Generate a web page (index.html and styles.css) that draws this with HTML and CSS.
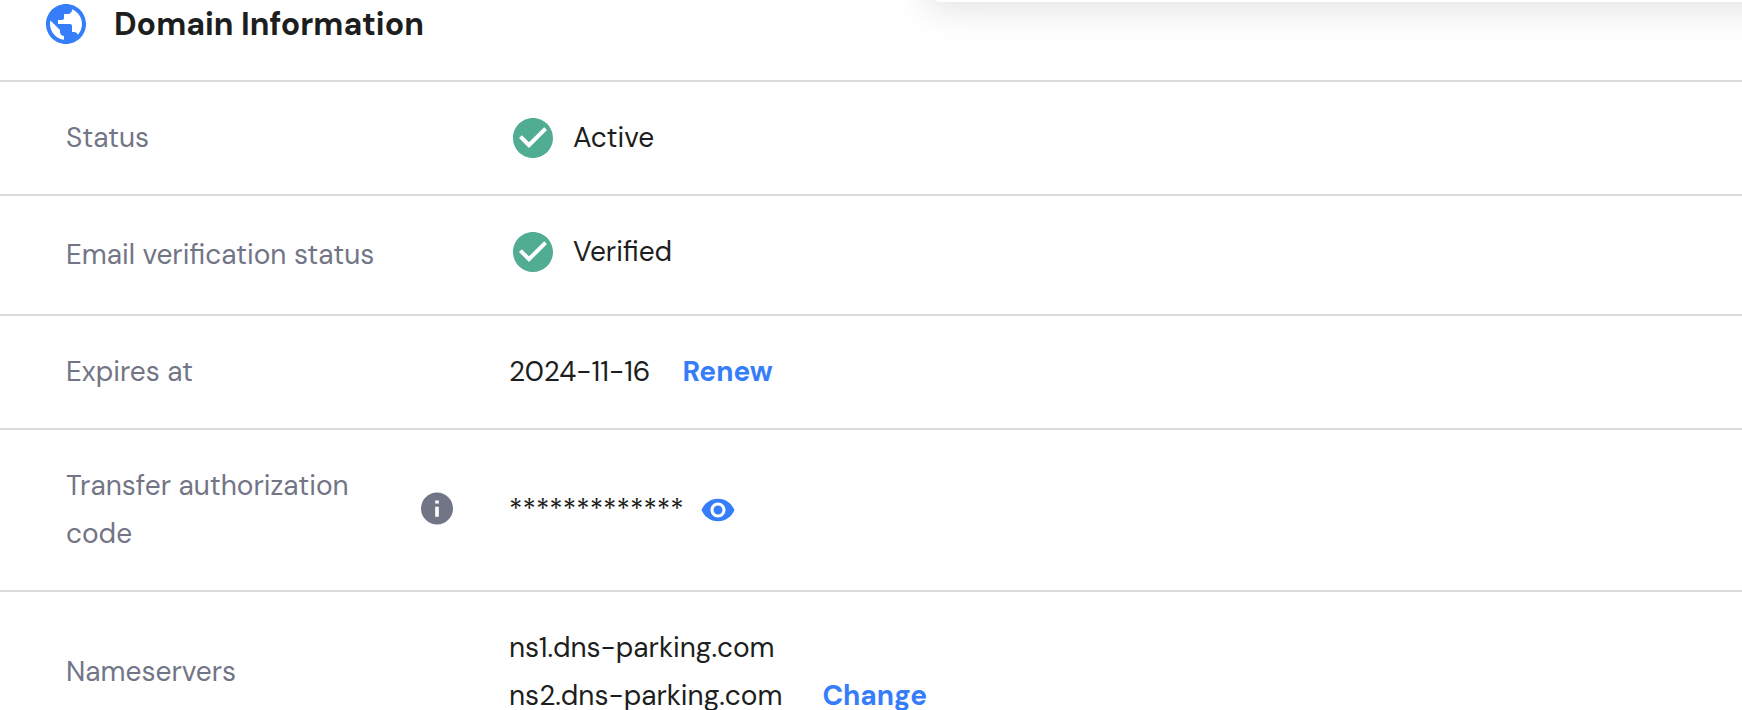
FILE: index.html
```html
<!DOCTYPE html>
<html lang="en">
<head>
<meta charset="utf-8">
<title>Domain Information</title>
<link rel="stylesheet" href="styles.css">
</head>
<body>
<main class="card">
  <header class="card-header">
    <svg class="icon-globe" viewBox="0 0 24 24"><path d="M12 2C6.48 2 2 6.48 2 12s4.48 10 10 10 10-4.480 10-10S17.520 2 12 2zm-1 17.930c-3.950-.49-7-3.850-7-7.930 0-.62.08-1.210.21-1.790L9 15v1c0 1.100.9 2 2 2v1.930zm6.900-2.540c-.26-.81-1-1.390-1.900-1.390h-1v-3c0-.55-.45-1-1-1H8v-2h2c.55 0 1-.45 1-1V7h2c1.100 0 2-.9 2-2v-.41c2.930 1.190 5 4.060 5 7.410 0 2.080-.8 3.970-2.100 5.390z"/></svg>
    <h1 class="title">Domain Information</h1>
  </header>
  <section class="row">
    <div class="label">Status</div>
    <div class="value">
      <svg class="icon-check" viewBox="0 0 24 24"><path d="M12 2C6.480 2 2 6.480 2 12s4.480 10 10 10 10-4.480 10-10S17.520 2 12 2zm-2 15l-5-5 1.410-1.410L10 14.170l7.590-7.590L19 8l-9 9z"/></svg>
      <span>Active</span>
    </div>
  </section>
  <section class="row row-email">
    <div class="label">Email verification status</div>
    <div class="value">
      <svg class="icon-check" viewBox="0 0 24 24"><path d="M12 2C6.480 2 2 6.480 2 12s4.480 10 10 10 10-4.480 10-10S17.520 2 12 2zm-2 15l-5-5 1.410-1.410L10 14.170l7.590-7.590L19 8l-9 9z"/></svg>
      <span>Verified</span>
    </div>
  </section>
  <section class="row">
    <div class="label">Expires at</div>
    <div class="value"><span>2024-11-16</span><a class="link link-renew">Renew</a></div>
  </section>
  <section class="row">
    <div class="label label-info">
      <span class="label-text">Transfer authorization code</span>
      <svg class="icon-info" viewBox="0 0 32 33"><circle cx="16" cy="16.500" r="16" fill="#727586"/><path fill="#fff" d="M14.200 8.400h3.600v3.200h-3.600zM14.200 14.800h3.600v10h-3.600z"/></svg>
    </div>
    <div class="value">
      <span>*************</span>
      <svg class="icon-eye" viewBox="0 0 24 24"><path d="M12 4.500C7 4.500 2.730 7.610 1 12c1.730 4.390 6 7.500 11 7.500s9.270-3.110 11-7.500c-1.730-4.390-6-7.500-11-7.500zM12 17c-2.760 0-5-2.240-5-5s2.240-5 5-5 5 2.240 5 5-2.240 5-5 5zm0-8c-1.660 0-3 1.340-3 3s1.340 3 3 3 3-1.340 3-3-1.340-3-3-3z"/></svg>
    </div>
  </section>
  <section class="row">
    <div class="label">Nameservers</div>
    <div class="value value-ns">
      <div>ns1.dns-parking.com<br>ns2.dns-parking.com</div><a class="link link-change">Change</a>
    </div>
  </section>
</main>
<div class="overlay-panel"></div>
</body>
</html>
```

FILE: styles.css
```css
* { box-sizing: border-box; }
html, body { height: 100%; overflow: hidden; }
body {
  margin: 0;
  background: #fff;
  color: #1d1e20;
  font: 400 28px/48px "DM Sans", Inter, sans-serif;
  -webkit-font-smoothing: antialiased;
}
svg { display: block; flex: none; }
.card-header {
  display: flex;
  align-items: flex-start;
  gap: 24px;
  height: 82px;
  padding-left: 42px;
  border-bottom: 2px solid #dadada;
}
.icon-globe { width: 48px; height: 48px; fill: #357df9; }
.title { margin: 0; font-size: 32px; line-height: 48px; font-weight: 700; }
.row {
  display: grid;
  grid-template-columns: 443px 1fr;
  align-items: center;
  padding: 32px 0 32px 66px;
  border-bottom: 2px solid #dadada;
}
.row-email .value { padding-bottom: 6px; }
.label { color: #727586; }
.label-info { display: flex; align-items: center; }
.label-text { width: 354px; padding-right: 50px; }
.icon-info { width: 32px; height: 33px; margin: 0 0 3px 1px; }
.value { display: flex; align-items: center; white-space: nowrap; }
.icon-check { width: 48px; height: 48px; margin-right: 16px; fill: #50ad92; }
.icon-eye { width: 36px; height: 36px; margin-left: 16px; fill: #357df9; }
.link { color: #357df9; font-weight: 700; }
.link-renew { margin-left: 32px; }
.value-ns { align-items: flex-end; }
.link-change { margin-left: 40px; }
/* Floating panel whose lower edge reaches over the header */
.overlay-panel {
  position: absolute;
  top: -198px;
  left: 926px;
  width: 1000px;
  height: 200px;
  border-radius: 16px;
  background: #fff;
  box-shadow: 0 6px 36px rgba(0, 0, 0, 0.125);
}
```
